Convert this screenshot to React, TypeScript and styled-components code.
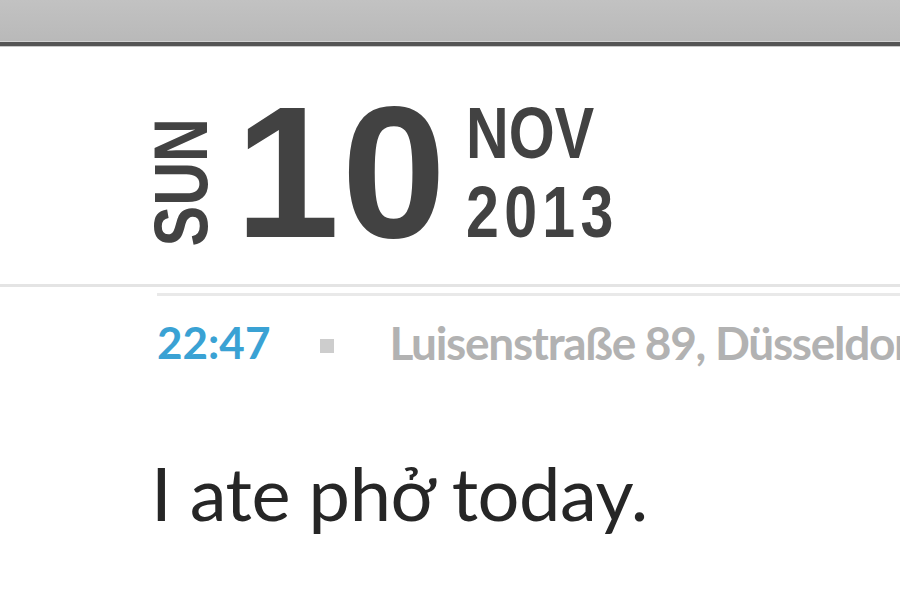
import React from "react";
import styled, { createGlobalStyle } from "styled-components";

const Global = createGlobalStyle`
  html, body { margin: 0; padding: 0; background: #fff; }
  body { width: 900px; height: 592px; overflow: hidden; }
`;

const Page = styled.div`
  width: 900px;
  height: 592px;
  background: #fff;
  overflow: hidden;
`;

const TopBar = styled.div`
  height: 41px;
  background: linear-gradient(#c2c2c2, #b9b9b9);
  border-bottom: 1px solid #d2d2d2;
  box-shadow: 0 4px 0 #555, 0 5px 0 #c8c8c8;
  margin-bottom: 5px;
`;

const DateRow = styled.div`
  display: flex;
  align-items: flex-start;
  height: 237px;
  padding-left: 143px;
  color: #424242;
  font-family: "Liberation Sans", Arial, sans-serif;
  font-weight: 700;
`;

const Weekday = styled.div`
  writing-mode: vertical-rl;
  transform: rotate(180deg) scaleY(0.8);
  font-size: 76px;
  line-height: 76px;
  margin-top: 55px;
`;

const DayNumber = styled.div`
  font-size: 188px;
  line-height: 150px;
  letter-spacing: 2px;
  margin-top: 50px;
  margin-left: 16px;
`;

const MonthYear = styled.div`
  display: flex;
  flex-direction: column;
  font-size: 73px;
  line-height: 79px;
  margin-top: 46px;
  margin-left: 18px;
  transform: scaleX(0.81);
  transform-origin: left center;
`;

const MonthLine = styled.span<{ $spacing: number }>`
  letter-spacing: ${(p) => p.$spacing}px;
`;

const Divider = styled.div`
  height: 3px;
  background: #e4e4e4;
`;

const Entry = styled.div`
  padding-left: 157px;
  padding-top: 6px;
`;

const EntryRule = styled.div`
  height: 3px;
  background: #e9e9e9;
`;

const Meta = styled.div`
  display: flex;
  align-items: center;
  margin-top: 24px;
  height: 44px;
  font-family: Lato, "Open Sans", sans-serif;
  font-weight: 700;
  line-height: 44px;
  white-space: nowrap;
`;

const Time = styled.span`
  color: #3aa2d4;
  font-size: 44px;
`;

const Bullet = styled.span`
  width: 14px;
  height: 14px;
  background: #cdcdcd;
  margin: 8px 55px 0 50px;
  flex: none;
`;

const Place = styled.span`
  color: #b2b2b2;
  font-size: 46px;
  letter-spacing: -1.3px;
  margin-top: 2px;
`;

const Body = styled.p`
  margin: 92px 0 0 -6px;
  font-family: Lato, "Open Sans", sans-serif;
  font-weight: 400;
  font-size: 74px;
  line-height: 74px;
  letter-spacing: -0.45px;
  color: #262626;
  white-space: nowrap;
`;

export default function App() {
  return (
    <Page>
      <Global />
      <TopBar />
      <DateRow>
        <Weekday>SUN</Weekday>
        <DayNumber>10</DayNumber>
        <MonthYear>
          <MonthLine $spacing={0}>NOV</MonthLine>
          <MonthLine $spacing={6.5}>2013</MonthLine>
        </MonthYear>
      </DateRow>
      <Divider />
      <Entry>
        <EntryRule />
        <Meta>
          <Time>22:47</Time>
          <Bullet />
          <Place>Luisenstraße 89, Düsseldorf</Place>
        </Meta>
        <Body>I ate phở today.</Body>
      </Entry>
    </Page>
  );
}
